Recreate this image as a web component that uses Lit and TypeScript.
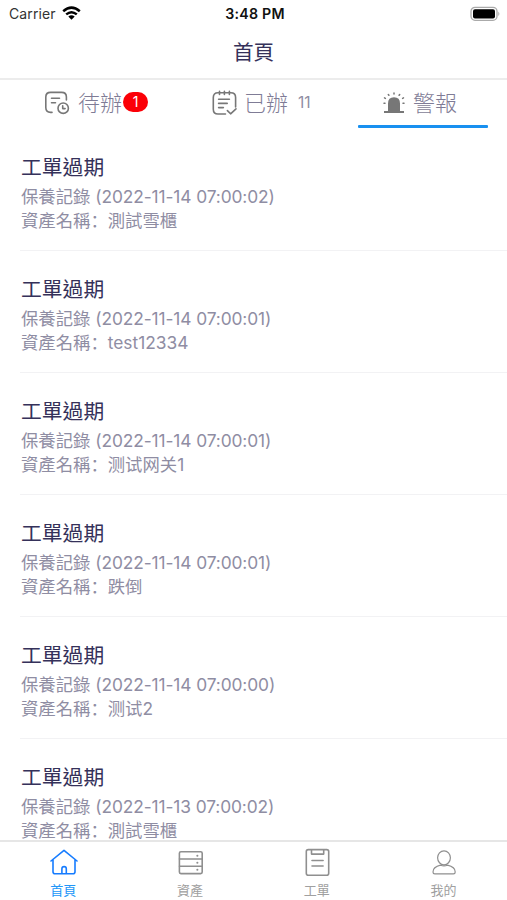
import { LitElement, html, svg, css } from "lit";
import { customElement } from "lit/decorators.js";

interface Alarm { time: string; name: string; simplified?: boolean }

const alarms: Alarm[] = [
  { time: "2022-11-14 07:00:02", name: "測試雪櫃" },
  { time: "2022-11-14 07:00:01", name: "test12334" },
  { time: "2022-11-14 07:00:01", name: "测试网关1", simplified: true },
  { time: "2022-11-14 07:00:01", name: "跌倒" },
  { time: "2022-11-14 07:00:00", name: "测试2", simplified: true },
  { time: "2022-11-13 07:00:02", name: "測試雪櫃" },
];

const icon = (w: number, h: number, body: unknown) => html`<svg width=${w} height=${h} viewBox="0 0 ${w} ${h}" fill="none" stroke="currentColor" stroke-width="1.6" stroke-linecap="round" stroke-linejoin="round">${body}</svg>`;

const pendingIcon = icon(26, 26, svg`<path d="M8 22.4H6.6Q1.8 22.4 1.8 17.6V7Q1.8 2.4 6.6 2.4H17.6Q22.4 2.4 22.4 7V10M7.5 8.3H15.5M7.5 12.8H11.5"/><circle cx="19.2" cy="18.2" r="5.2"/><path d="M18.7 15.8V18.6H21.1"/>`);
const doneIcon = icon(26, 26, svg`<path d="M13.5 24H6Q1.3 24 1.3 19.2V7.4Q1.3 2.8 6 2.8H18.8Q23.6 2.8 23.6 7.4V17M7.5 1.2V4.4M12.4 1.2V4.4M17.4 1.2V4.4M6.6 9.2H17.4M6.6 13.4H15.2M6.6 17.6H11.4M15.4 20.6L18.6 23.8L24 18.8"/>`);
const alarmIcon = icon(22, 22, svg`<path fill="currentColor" stroke="none" d="M5 19V11.5Q5 5.2 11 5.2Q17 5.2 17 11.5V19H21V21H1V19Z"/><path stroke-width="1.5" d="M11 1.1V2M5.3 2.5L5.9 3.3M16.7 2.5L16.1 3.3M1.5 5.9L2.4 6.4M20.5 5.9L19.6 6.4M1 11.2H2M20 11.2H21"/>`);

const navItems = [
  { label: "首頁", active: true, art: icon(30, 28, svg`<path d="M3 13L16 2.4L29 13M5 11.4V23.7Q5 25.7 7 25.7H25Q27 25.7 27 23.7V11.4M13.9 25.5V20.8Q13.9 18.6 16.1 18.6Q18.3 18.6 18.3 20.8V25.5"/>`) },
  { label: "資產", active: false, art: icon(30, 28, svg`<rect x="4.4" y="3.8" width="22.8" height="21.8" rx="1.5"/><path d="M4.5 11H27M4.5 18.3H27"/><path stroke-width="2" d="M22.3 7.7H22.4M22.3 14.8H22.4M22.3 21.8H22.4"/>`) },
  { label: "工單", active: false, art: icon(30, 28, svg`<rect x="4.3" y="1.6" width="22.4" height="25.6" rx="2"/><path d="M9.5 1.9V6.1H21.7V1.9M10 12.5H21.1M10 18H21.1"/>`) },
  { label: "我的", active: false, art: icon(30, 28, svg`<g stroke-width="1.2"><ellipse cx="15" cy="9.8" rx="6.4" ry="7"/><path d="M11.5 17.2Q4 19 4 23.9Q4 25.8 5.8 25.8H24.4Q26.2 25.8 26.2 23.9Q26.2 19 18.5 17.2Q15 18.4 11.5 17.2"/></g>`) },
];

@customElement("app-root")
export class AppRoot extends LitElement {
  static styles = css`
    * { box-sizing: border-box; }
    :host {
      display: flex; flex-direction: column; height: 900px; width: 100%;
      overflow: hidden; background: #fff; color: #8f8da3;
      font-family: Inter, "Noto Sans CJK TC", sans-serif;
    }
    svg { display: block; flex: none; }
    .status {
      height: 28px; flex: none; display: grid; grid-template-columns: 1fr auto 1fr;
      align-items: center; padding: 0 6px 0 9px; color: #111; font-size: 14px; line-height: 28px;
    }
    .carrier { display: flex; align-items: center; gap: 6px; letter-spacing: .1px; color: #333; }
    .carrier svg { color: #000; margin-bottom: 2px; }
    .clock { font-weight: 600; font-size: 14.2px; letter-spacing: .25px; }
    .battery { justify-self: end; margin-bottom: 1px; }
    .title {
      height: 52px; flex: none; border-bottom: 2px solid #ececec; text-align: center;
      font-size: 20.6px; line-height: 50px; color: #35315a;
    }
    .tabs { height: 48px; flex: none; display: grid; grid-template-columns: 169px 169px 169px; }
    .tab { position: relative; display: flex; align-items: center; height: 48px; padding-bottom: 2px; font-size: 22px; line-height: 46px; }
    .tab svg { color: #777; }
    .pending { padding-left: 44px; }
    .done { padding-left: 43px; }
    .alarm { padding-left: 45px; }
    .text { margin-left: 8px; font-weight: 300; color: #7f7c96; }
    .done .text { margin-left: 6px; }
    .badge {
      width: 25px; height: 20px; margin-left: 1px; border-radius: 10px; background: #fb0007; color: #fff;
      font-size: 14px; line-height: 20px; text-align: center; margin-bottom: 2px;
    }
    .count { font-size: 15.5px; margin-left: 10px; margin-bottom: 1px; }
    .alarm::after {
      content: ""; position: absolute; left: 20px; bottom: 0; width: 130px; height: 3px;
      border-radius: 1px; background: #1890f0;
    }
    .list { flex: 1; min-height: 0; overflow: hidden; padding-top: 1px; }
    .item { height: 122px; margin-left: 20px; padding: 23px 0 0 1px; border-bottom: 1px solid #f2f2f4; }
    .heading { font-size: 20.8px; line-height: 32px; color: #35315a; }
    .detail { font-size: 17.35px; line-height: 24px; white-space: pre; }
    .heading + .detail { margin-top: 1px; }
    .time { letter-spacing: -.11px; }
    .sc { font-family: Inter, "Noto Sans CJK SC", sans-serif; }
    .nav { height: 60px; flex: none; border-top: 2px solid #e6e6e6; display: grid; grid-template-columns: repeat(4, 1fr); }
    .link { display: flex; flex-direction: column; align-items: center; padding-top: 6px; color: #8f8f8f; }
    .label { font-size: 13px; line-height: 18px; margin-top: 5px; color: #a0a0a0; }
    .active { color: #167cff; }
    .active .label { color: #2196f8; }
  `;

  render() {
    return html`
      <div class="status">
        <div class="carrier">Carrier
          <svg width="19" height="14" viewBox="0 0 19 14" fill="none" stroke="currentColor" stroke-width="2.5">
            <path d="M1.2 5.2Q9.5 -1.9 17.8 5.2M4.2 8.4Q9.5 4 14.8 8.4"/><path fill="currentColor" stroke="none" d="M6.3 10.4Q9.5 7.9 12.7 10.4L9.5 13.7Z"/>
          </svg>
        </div>
        <div class="clock">3:48 PM</div>
        <svg class="battery" width="31" height="16" viewBox="0 0 31 16">
          <rect x="1" y="1.3" width="26" height="13" rx="4" fill="#fff" stroke="#aaa" stroke-width="1.3"/>
          <rect x="3" y="3.2" width="22" height="9.2" rx="2" fill="#000"/>
          <path d="M28.3 5.5Q30.5 7.8 28.3 10Z" fill="#aaa"/>
        </svg>
      </div>
      <div class="title">首頁</div>
      <div class="tabs">
        <div class="tab pending">${pendingIcon}<span class="text">待辦</span><span class="badge">1</span></div>
        <div class="tab done">${doneIcon}<span class="text">已辦</span><span class="count">11</span></div>
        <div class="tab alarm">${alarmIcon}<span class="text">警報</span></div>
      </div>
      <div class="list">
        ${alarms.map(a => html`<div class="item">
          <div class="heading">工單過期</div>
          <div class="detail">保養記錄 <span class="time">(${a.time})</span></div>
          <div class="detail">資產名稱<span class="sc">：</span><span class=${a.simplified ? "sc" : ""}>${a.name}</span></div>
        </div>`)}
      </div>
      <div class="nav">
        ${navItems.map(n => html`<div class="link ${n.active ? "active" : ""}">${n.art}<span class="label">${n.label}</span></div>`)}
      </div>`;
  }
}
